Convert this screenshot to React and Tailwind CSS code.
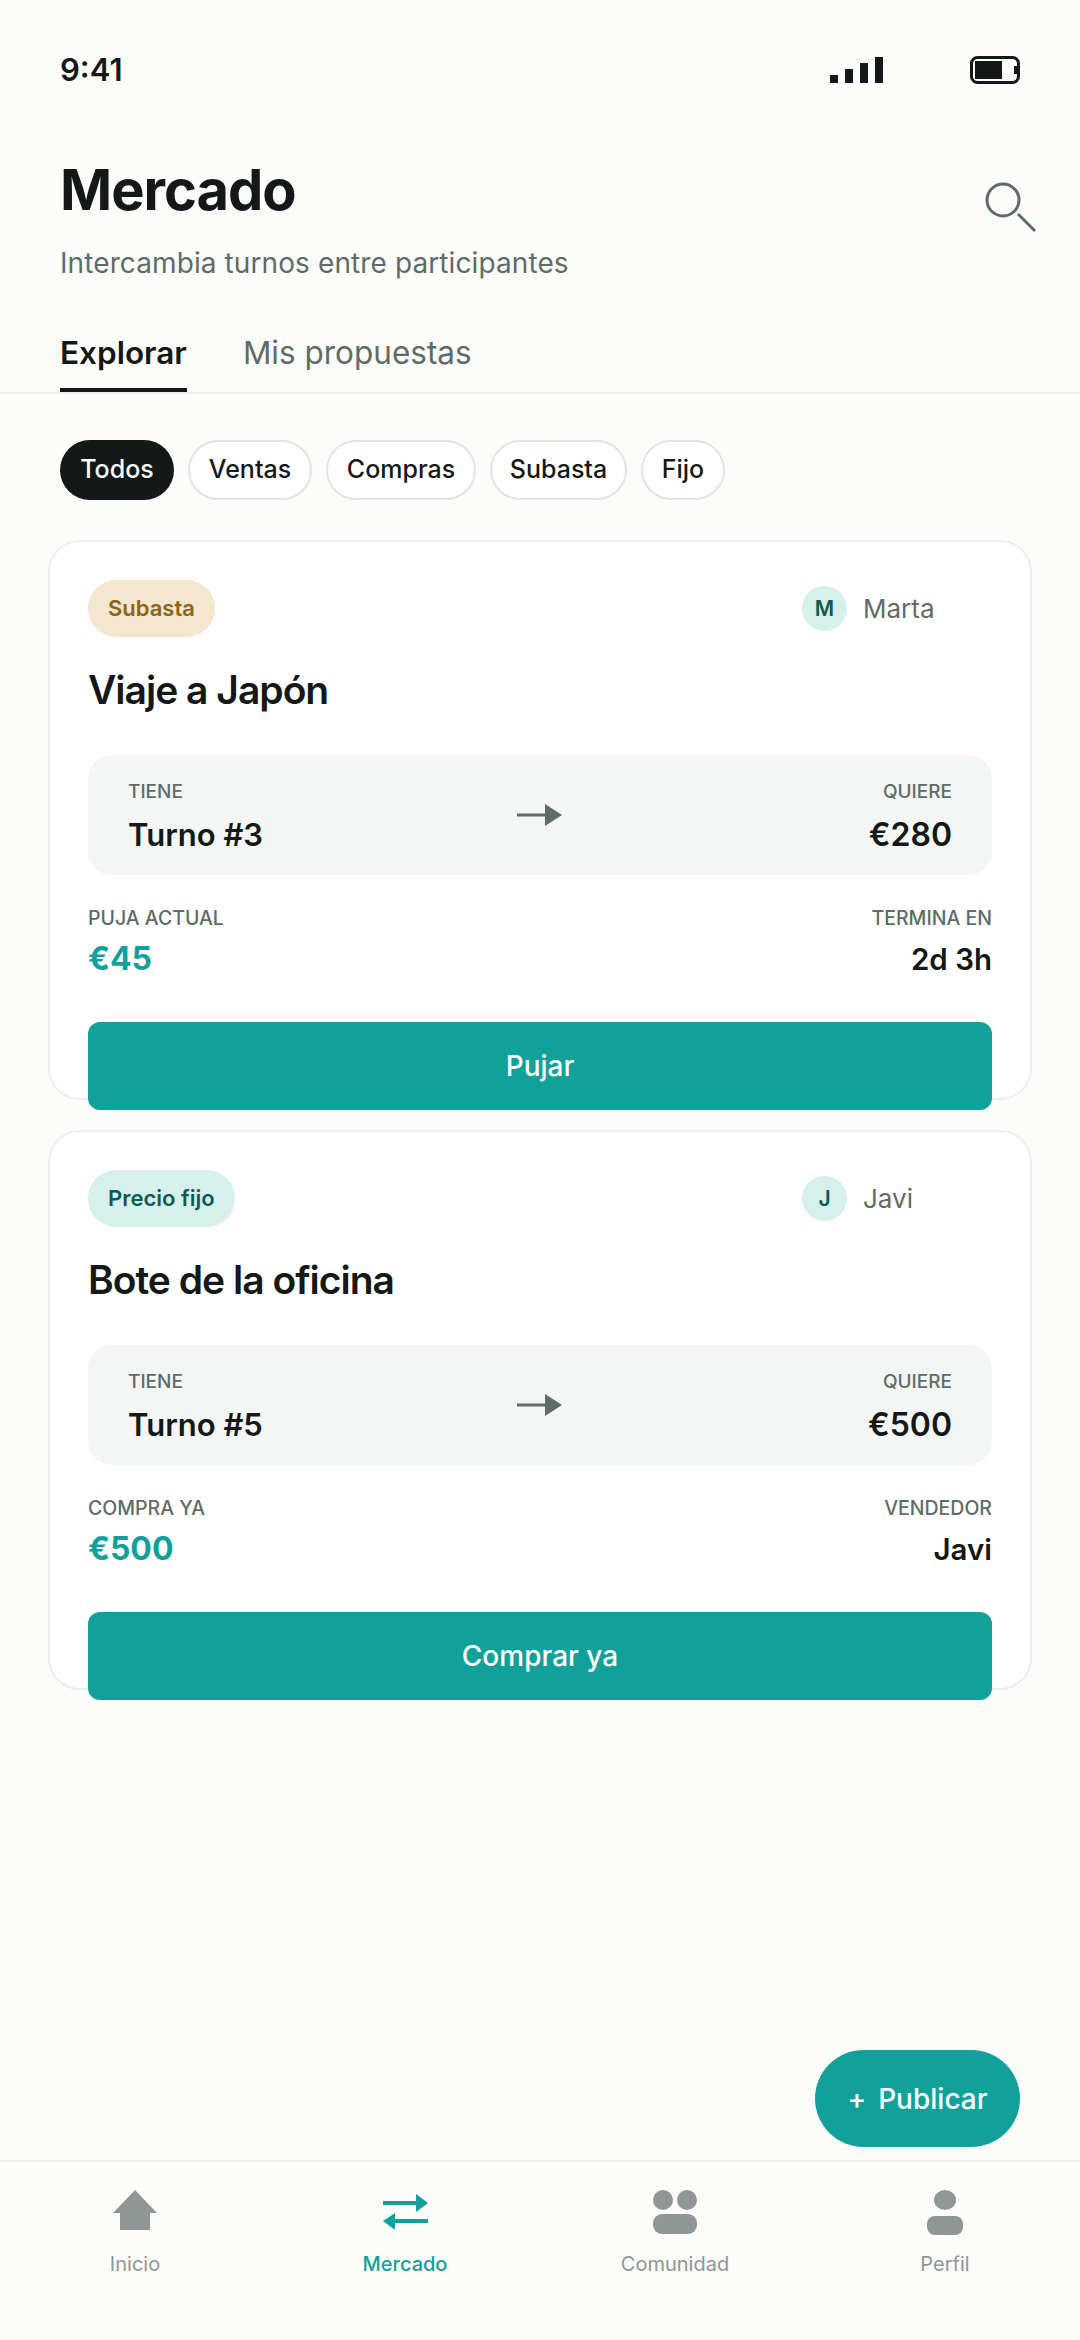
import React from "react";

const FONT = { fontFamily: "Inter, 'Noto Sans', sans-serif" };

const chips = [
  { label: "Todos", active: true, width: "w-[114px]" },
  { label: "Ventas", width: "w-[124px]" },
  { label: "Compras", width: "w-[150px]" },
  { label: "Subasta", width: "w-[137px]" },
  { label: "Fijo", width: "w-[84px]" },
];

const Arrow = () => (
  <svg width="46" height="24" viewBox="0 0 46 24" fill="#5f6b67">
    <rect x="0" y="10.5" width="30" height="3" />
    <path d="M28 1 L45 12 L28 23 Z" />
  </svg>
);

const Listing = ({ tag, tagClass, initial, seller, title, has, wants, leftLabel, leftValue, rightLabel, rightValue, action }) => (
  <div className="h-[560px] rounded-[32px] border-2 border-[#eeefed] bg-white px-[38px] pt-[38px]">
    <div className="flex h-[57px] items-center justify-between">
      <span className={`flex h-[57px] items-center rounded-full px-[20px] text-[22px] font-semibold ${tagClass}`}>{tag}</span>
      <div className="flex w-[190px] items-center gap-[16px]">
        <span className="flex h-[45px] w-[45px] items-center justify-center rounded-full bg-[#d6f0ec] text-[21px] font-semibold text-[#0b5c55]">{initial}</span>
        <span className="text-[26px] text-[#5f6b67]">{seller}</span>
      </div>
    </div>
    <h2 className="mt-[29px] text-[39px] leading-[48px] font-semibold tracking-[-1px] text-[#141816]">{title}</h2>
    <div className="mt-[41px] flex h-[120px] items-center justify-between rounded-[24px] bg-[#f4f6f5] px-[40px]">
      <div className="w-[200px] pt-[3px]">
        <p className="text-[19px] leading-[24px] font-medium text-[#5f6b67]">TIENE</p>
        <p className="mt-[12px] text-[31px] leading-[38px] font-semibold text-[#141816]">{has}</p>
      </div>
      <Arrow />
      <div className="w-[200px] pt-[3px] text-right">
        <p className="text-[19px] leading-[24px] font-medium text-[#5f6b67]">QUIERE</p>
        <p className="mt-[12px] text-[32px] leading-[38px] font-semibold text-[#141816]">{wants}</p>
      </div>
    </div>
    <div className="mt-[31px] flex justify-between">
      <div>
        <p className="text-[19.5px] leading-[24px] font-medium text-[#5f6b67]">{leftLabel}</p>
        <p className="mt-[9px] text-[32px] leading-[40px] font-bold text-[#12a19a]">{leftValue}</p>
      </div>
      <div className="text-right">
        <p className="text-[19.5px] leading-[24px] font-medium text-[#5f6b67]">{rightLabel}</p>
        <p className="mt-[9px] text-[29.5px] leading-[40px] font-semibold text-[#141816]">{rightValue}</p>
      </div>
    </div>
    <button className="mt-[43px] flex h-[88px] w-full items-center justify-center rounded-[12px] bg-[#12a19a] text-[28px] font-medium text-white">{action}</button>
  </div>
);

const HomeIcon = () => (
  <svg width="44" height="46" viewBox="0 0 44 46" fill="#8f9693">
    <path d="M22 0 L44 23 L37 23 L37 40 L7 40 L7 23 L0 23 Z" />
  </svg>
);

const SwapIcon = () => (
  <svg width="46" height="46" viewBox="0 0 46 46" fill="#12a19a">
    <rect x="1" y="11" width="36" height="4" />
    <path d="M34 4 L46 13 L34 22 Z" />
    <rect x="10" y="29" width="36" height="4" />
    <path d="M13 23 L1 31 L13 40 Z" />
  </svg>
);

const GroupIcon = () => (
  <svg width="46" height="46" viewBox="0 0 46 46" fill="#8f9693">
    <circle cx="11" cy="10" r="10" />
    <circle cx="35" cy="10" r="10" />
    <rect x="1" y="24" width="44" height="20" rx="9" />
  </svg>
);

const ProfileIcon = () => (
  <svg width="46" height="46" viewBox="0 0 46 46" fill="#8f9693">
    <ellipse cx="23" cy="10" rx="11" ry="10" />
    <rect x="5" y="26" width="36" height="19" rx="8" />
  </svg>
);

const tabs = [
  { label: "Inicio", icon: <HomeIcon /> },
  { label: "Mercado", icon: <SwapIcon />, active: true },
  { label: "Comunidad", icon: <GroupIcon /> },
  { label: "Perfil", icon: <ProfileIcon /> },
];

const App = () => {
  return (
    <div style={FONT} className="relative flex h-[2340px] w-[1080px] flex-col overflow-hidden bg-[#fcfcfa]">
      <div className="flex h-[140px] items-center justify-between pr-[60px] pl-[60px]">
        <span className="text-[31px] font-semibold text-[#141816]">9:41</span>
        <div className="flex items-center gap-[87px]">
          <div className="flex items-end gap-[7px]">
            <span className="h-[8px] w-[8px] bg-[#141816]" />
            <span className="h-[14px] w-[8px] bg-[#141816]" />
            <span className="h-[20px] w-[8px] bg-[#141816]" />
            <span className="h-[26px] w-[8px] bg-[#141816]" />
          </div>
          <svg width="50" height="28" viewBox="0 0 50 28" fill="none">
            <rect x="1.5" y="1.5" width="47" height="25" rx="6" stroke="#141816" strokeWidth="3" />
            <rect x="5" y="5" width="27" height="18" fill="#141816" />
            <rect x="44" y="10" width="4" height="8" fill="#141816" />
          </svg>
        </div>
      </div>

      <div className="flex items-start justify-between pr-[43px] pl-[60px]">
        <div>
          <h1 className="mt-[16px] text-[56px] leading-[68px] font-bold tracking-[-1px] text-[#141816]">Mercado</h1>
          <p className="mt-[21px] text-[28px] leading-[36px] tracking-[0.1px] text-[#5f6b67]">Intercambia turnos entre participantes</p>
        </div>
        <svg className="mt-[42px]" width="52" height="54" viewBox="0 0 52 54" fill="none" stroke="#5f6b67" strokeWidth="3">
          <circle cx="18" cy="18" r="16" />
          <path d="M33 32 L50 49" />
        </svg>
      </div>

      <div className="mt-[52px] flex gap-[56px] border-b-2 border-[#eceeec] pl-[60px]">
        <span className="border-b-[4px] border-[#141816] pb-[15px] text-[31.5px] leading-[40px] font-semibold text-[#141816]">Explorar</span>
        <span className="text-[31.5px] leading-[40px] text-[#5f6b67]">Mis propuestas</span>
      </div>

      <div className="mt-[46px] flex gap-[14px] pl-[60px]">
        {chips.map((chip) => (
          <span
            key={chip.label}
            className={
              chip.active
                ? `flex h-[60px] items-center justify-center rounded-full bg-[#141816] text-[25px] font-medium text-white ${chip.width}`
                : `flex h-[60px] items-center justify-center rounded-full border-2 border-[#e2e4e2] bg-white text-[25px] font-medium text-[#141816] ${chip.width}`
            }
          >
            {chip.label}
          </span>
        ))}
      </div>

      <div className="mt-[40px] flex flex-col gap-[30px] px-[48px]">
        <Listing
          tag="Subasta"
          tagClass="bg-[#f5e6cf] text-[#8c6414]"
          initial="M"
          seller="Marta"
          title="Viaje a Japón"
          has="Turno #3"
          wants="€280"
          leftLabel="PUJA ACTUAL"
          leftValue="€45"
          rightLabel="TERMINA EN"
          rightValue="2d 3h"
          action="Pujar"
        />
        <Listing
          tag="Precio fijo"
          tagClass="bg-[#d6f0ec] text-[#0b5c55]"
          initial="J"
          seller="Javi"
          title="Bote de la oficina"
          has="Turno #5"
          wants="€500"
          leftLabel="COMPRA YA"
          leftValue="€500"
          rightLabel="VENDEDOR"
          rightValue="Javi"
          action="Comprar ya"
        />
      </div>

      <div className="absolute top-[2050px] left-[815px] flex h-[97px] w-[205px] items-center justify-center gap-[12px] rounded-full bg-[#12a19a] text-[28px] font-medium text-white">
        <span>+</span>
        <span>Publicar</span>
      </div>

      <div className="mt-auto grid h-[180px] grid-cols-4 border-t-2 border-[#eceeec] pt-[28px]">
        {tabs.map((tab) => (
          <div key={tab.label} className="flex flex-col items-center">
            <div className="flex h-[46px] items-center">{tab.icon}</div>
            <span className={tab.active ? "mt-[13px] text-[20px] font-medium text-[#12a19a]" : "mt-[13px] text-[20px] text-[#8f9693]"}>{tab.label}</span>
          </div>
        ))}
      </div>
    </div>
  );
};

export default App;
